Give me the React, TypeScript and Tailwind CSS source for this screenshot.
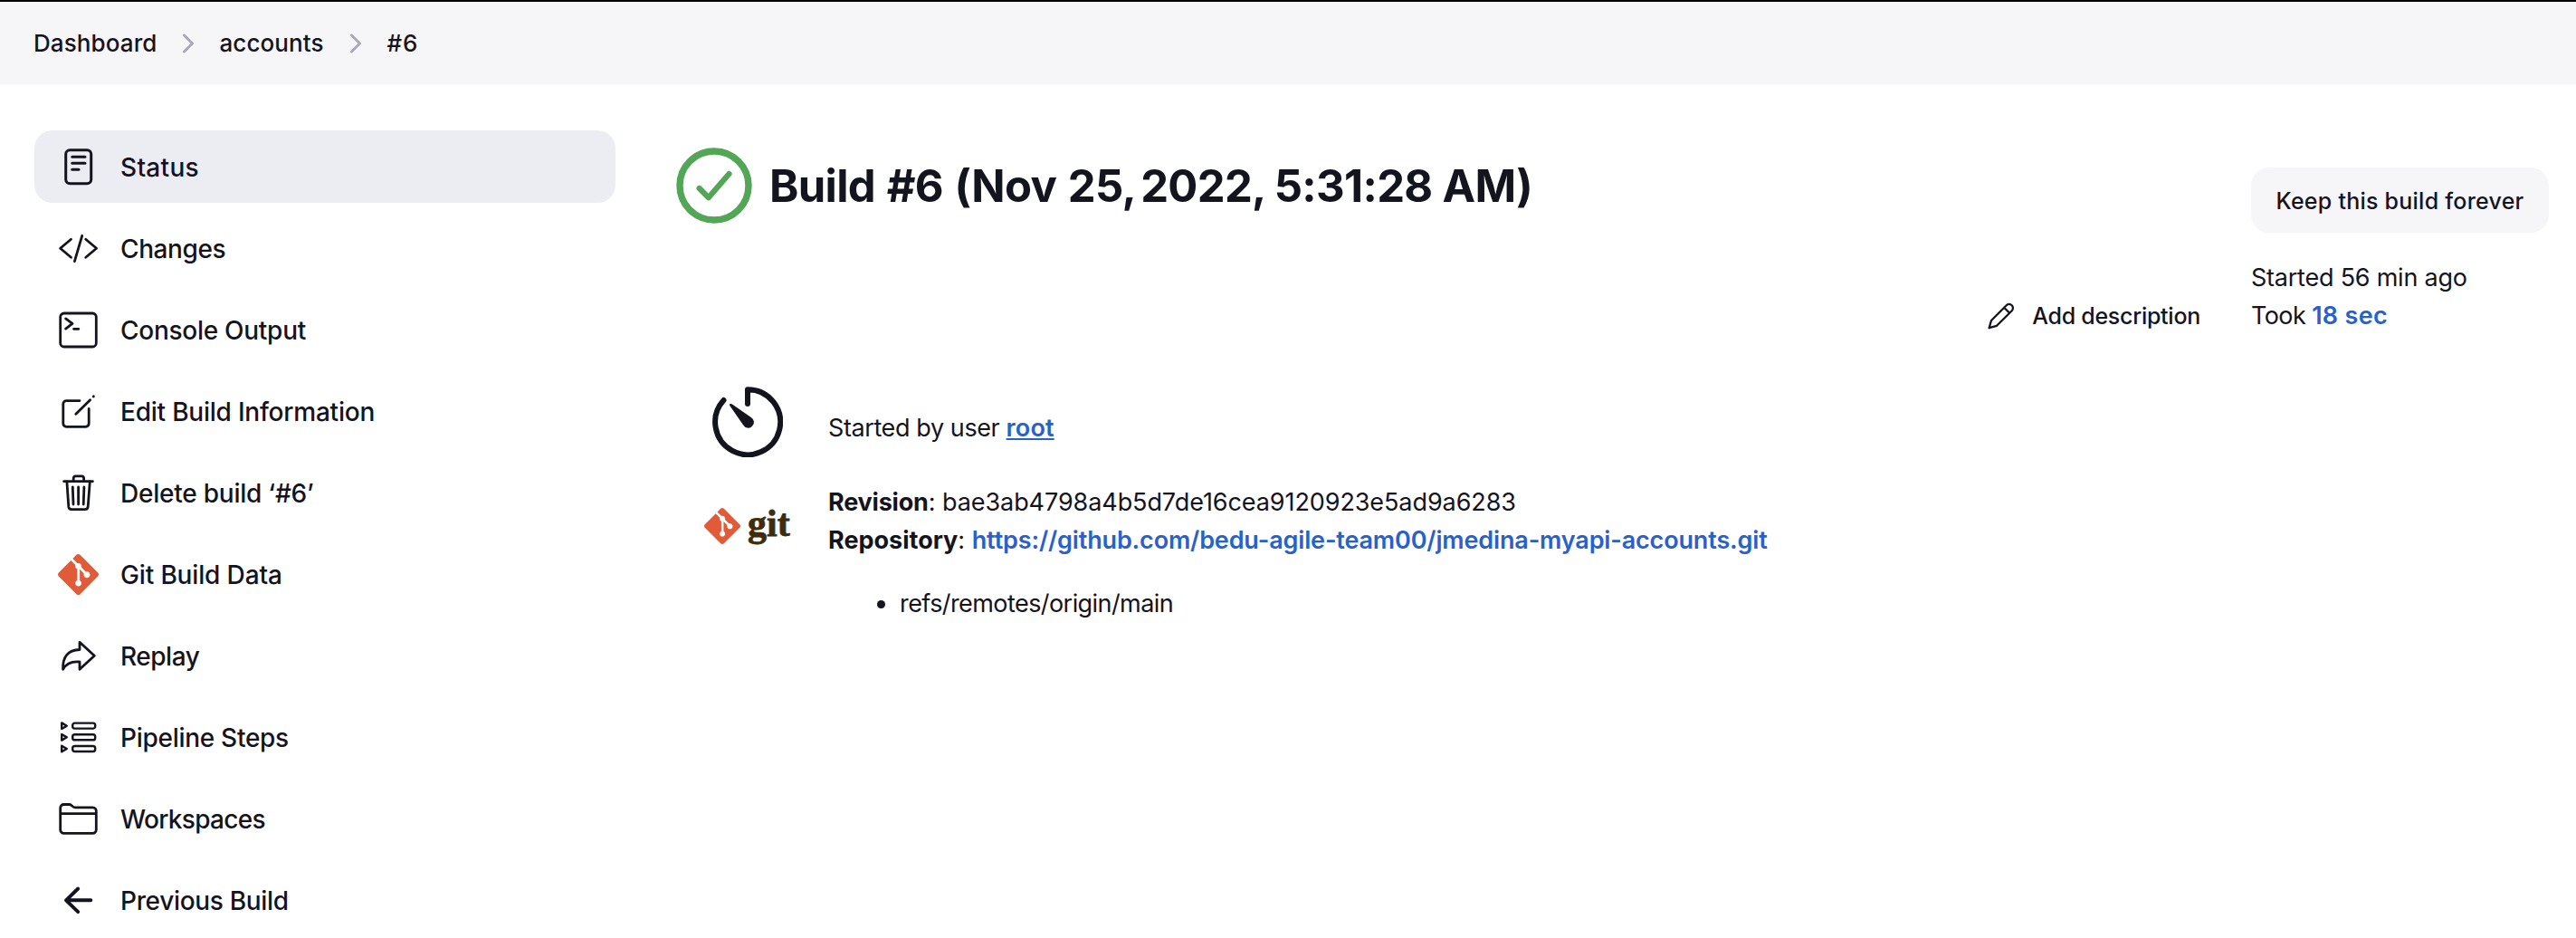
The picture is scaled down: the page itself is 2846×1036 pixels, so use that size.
import type { ReactNode } from "react";
import { SiGit } from "react-icons/si";

function Icon({ children, w = 2.8 }: { children: ReactNode; w?: number }) {
  return (
    <svg
      viewBox="0 0 48 48"
      className="size-12 shrink-0"
      fill="none"
      stroke="currentColor"
      strokeWidth={w}
      strokeLinecap="round"
      strokeLinejoin="round"
    >
      {children}
    </svg>
  );
}

const tasks: { label: string; spacing: string; active?: boolean; icon: ReactNode }[] = [
  {
    label: "Status",
    spacing: "tracking-[0.3px]",
    active: true,
    icon: (
      <Icon w={3}>
        <rect x="10.7" y="5.8" width="28" height="37" rx="4.5" />
        <path d="M17.7 13.3H32M17.7 20.3H32M17.7 27.3H25" />
      </Icon>
    ),
  },
  {
    label: "Changes",
    spacing: "tracking-[-0.4px]",
    icon: (
      <Icon w={2.8}>
        <path d="M16.5 14.3L4.6 24.3l11.9 10M32.7 14.3l11.9 10-11.9 10M28.7 10.3l-8.3 28.4" />
      </Icon>
    ),
  },
  {
    label: "Console Output",
    spacing: "tracking-[-0.27px]",
    icon: (
      <Icon w={2.8}>
        <rect x="4.7" y="6" width="39.6" height="37" rx="4" />
        <path d="M10.6 11.9l7.4 5.5-7.4 5.7M19.5 23.3h5.3" />
      </Icon>
    ),
  },
  {
    label: "Edit Build Information",
    spacing: "tracking-[-0.22px]",
    icon: (
      <Icon w={2.8}>
        <path d="M26 12.6H11.3a3.5 3.5 0 0 0-3.5 3.5v21.7a3.5 3.5 0 0 0 3.5 3.5h21.4a3.5 3.5 0 0 0 3.5-3.5V21.5" />
        <path d="M21.8 27.3L37.6 11.7M41.2 8l.2-.2" />
      </Icon>
    ),
  },
  {
    label: "Delete build ‘#6’",
    spacing: "tracking-[-0.23px]",
    icon: (
      <Icon w={2.8}>
        <path d="M8.6 11.7h31.8M19.2 11.5V8.2a2.3 2.3 0 0 1 2.3-2.3h6.8a2.3 2.3 0 0 1 2.3 2.3v3.3" />
        <path d="M11.9 12l1.9 27.7a3.3 3.3 0 0 0 3.3 3h14.8a3.3 3.3 0 0 0 3.3-3L37.3 12" />
        <path d="M18.3 18l.7 19M24.6 18v19M30.9 18l-.7 19" />
      </Icon>
    ),
  },
  {
    label: "Git Build Data",
    spacing: "tracking-[-0.15px]",
    icon: (
      <span className="flex size-12 shrink-0 items-center justify-center">
        <SiGit className="size-[45px] text-[#e15b38]" />
      </span>
    ),
  },
  {
    label: "Replay",
    spacing: "tracking-[-0.48px]",
    icon: (
      <Icon w={2.8}>
        <path d="M26 9.3L42.3 24.3 26 39.3V31C17.5 30.2 11.5 32 7.6 39.3C7 25.5 13 17.8 26 17.5Z" />
      </Icon>
    ),
  },
  {
    label: "Pipeline Steps",
    spacing: "tracking-[-0.28px]",
    icon: (
      <Icon w={2.4}>
        <path d="M6.2 8.4l5.6 3.3-5.6 3.3zM6.2 21l5.6 3.3-5.6 3.3zM6.2 33.7l5.6 3.3-5.6 3.3z" />
        <rect x="18.2" y="8.6" width="25" height="6" rx="2.4" />
        <rect x="18.2" y="21.3" width="25" height="6" rx="2.4" />
        <rect x="18.2" y="34" width="25" height="6" rx="2.4" />
      </Icon>
    ),
  },
  {
    label: "Workspaces",
    spacing: "tracking-[-0.68px]",
    icon: (
      <Icon w={2.8}>
        <path d="M4.7 36.5V12.2A3.8 3.8 0 0 1 8.5 8.5h6.2c2.6 0 3.3 3.3 6 3.3h19.8a3.8 3.8 0 0 1 3.8 3.8v20.9a3.8 3.8 0 0 1-3.8 3.8h-32a3.8 3.8 0 0 1-3.8-3.8zM4.7 18.7h39.6" />
      </Icon>
    ),
  },
  {
    label: "Previous Build",
    spacing: "tracking-[-0.33px]",
    icon: (
      <Icon w={3.9}>
        <path d="M38.3 24.3H11M24.2 11.5L11 24.3l13.2 12.9" />
      </Icon>
    ),
  },
];

function Chevron() {
  return (
    <svg
      viewBox="0 0 12 22"
      className="h-[22px] w-3 shrink-0"
      fill="none"
      stroke="#a7a7b8"
      strokeWidth="2.8"
      strokeLinecap="round"
      strokeLinejoin="round"
    >
      <path d="M1.5 2l9 9-9 9" />
    </svg>
  );
}

export default function App() {
  return (
    <div className="h-[1036px] overflow-hidden bg-white font-['Inter',sans-serif] text-[27px] leading-[42px] text-[#14141f]">
      <nav className="flex h-[93px] items-center border-t-2 border-black bg-[#f6f6f8] pl-[37px] text-[26px] font-medium">
        <span className="mr-[28px] tracking-[0.1px]">Dashboard</span>
        <Chevron />
        <span className="mr-[29px] ml-[29px] tracking-[0.09px]">accounts</span>
        <Chevron />
        <span className="ml-[29px] tracking-[0.7px]">#6</span>
      </nav>

      <div className="flex pt-[51px] pr-[30px] pl-[38px]">
        <aside className="flex w-[642px] shrink-0 flex-col gap-2.5">
          {tasks.map((t) => (
            <a
              key={t.label}
              className={`flex h-20 shrink-0 items-center gap-[23px] rounded-[20px] pl-6 text-[28px] font-medium ${t.active ? "bg-[#ecedf3]" : ""}`}
            >
              {t.icon}
              <span className={`pt-0.5 ${t.spacing}`}>{t.label}</span>
            </a>
          ))}
        </aside>

        <main className="ml-[67px] flex-1">
          <div className="flex h-[226px]">
            <div className="mt-[19px] flex h-[84px] flex-1 items-center gap-[19px]">
              <svg
                viewBox="0 0 84 84"
                className="size-[84px] shrink-0"
                fill="none"
                stroke="#52a655"
                strokeLinecap="round"
                strokeLinejoin="round"
              >
                <circle cx="42" cy="42" r="38" strokeWidth="7.4" />
                <path d="M25.6 45l10.2 10.2L58.5 29" strokeWidth="6.2" />
              </svg>
              <h1 className="pt-0.5 text-[49px] leading-[60px] font-bold tracking-[-0.67px]">
                <span className="mr-[-6px] [word-spacing:1.7px]">Build #6 (Nov 25,</span>{" "}
                <span className="mr-[-2px]">2022,</span> 5:31:28 AM)
              </h1>
            </div>
            <a className="mr-[56px] flex items-center gap-[19px] self-end text-[25px] font-medium">
              <svg
                viewBox="0 0 30 30"
                className="size-[30px]"
                fill="none"
                stroke="currentColor"
                strokeWidth="2.3"
                strokeLinecap="round"
                strokeLinejoin="round"
              >
                <path d="M1.6 28.2L4 20 20.7 3.2a4.2 4.2 0 0 1 6 6L10 25.8zM18.2 5.8l6 6" />
              </svg>
              <span className="tracking-[-0.27px]">Add description</span>
            </a>
            <div className="w-[329px] pt-[41px]">
              <button className="block h-[72px] w-[329px] rounded-[20px] bg-[#f6f6f8] pt-0.5 text-[25px] font-medium tracking-[0.24px]">
                Keep this build forever
              </button>
              <div className="mt-[29px]">
                <p className="tracking-[-0.23px]">Started 56 min ago</p>
                <p>
                  <span className="tracking-[-0.6px]">Took </span>
                  <a className="font-semibold tracking-[0.3px] text-[#2861cb]">18 sec</a>
                </p>
              </div>
            </div>
          </div>

          <section className="mt-[57px] flex h-[78px]">
            <div className="w-[168px] shrink-0 pl-10">
              <svg
                viewBox="0 0 78 78"
                className="size-[78px]"
                fill="none"
                stroke="currentColor"
                strokeWidth="6"
                strokeLinecap="round"
                strokeLinejoin="round"
              >
                <path d="M39 19V3.2A36 36 0 1 1 12.5 15" />
                <path
                  d="M19.3 19.3c-.8.8.2 2.1.8 3L34.2 42.5a6.3 6.3 0 1 0 8.6-8.6L22.3 19.7c-.9-.6-2.2-1.2-3-.4z"
                  fill="currentColor"
                  stroke="none"
                />
              </svg>
            </div>
            <p className="pt-[25px] tracking-[-0.4px]">
              Started by user{" "}
              <a className="font-semibold tracking-[0.15px] text-[#2861cb] underline decoration-2 underline-offset-[2px]">
                root
              </a>
            </p>
          </section>

          <section className="mt-7 flex">
            <div className="flex w-[168px] shrink-0 items-start pt-7 pl-[31px]">
              <SiGit className="size-10 text-[#e15b38]" />
              <span className="ml-2 font-['Liberation_Serif',serif] text-[42px] leading-[34px] font-bold text-[#3e2c0b] [-webkit-text-stroke:0.8px_#3e2c0b]">
                git
              </span>
            </div>
            <div className="pt-px">
              <p>
                <b className="tracking-[-0.21px]">Revision</b>:{" "}
                <span className="tracking-[-0.08px]">bae3ab4798a4b5d7de16cea9120923e5ad9a6283</span>
              </p>
              <p>
                <b>Repository</b>:{" "}
                <a className="font-semibold tracking-[-0.15px] text-[#2861cb]">
                  https://github.com/bedu-agile-team00/jmedina-myapi-accounts.git
                </a>
              </p>
              <ul className="mt-7 pl-[54px]">
                <li className="flex items-center gap-4 tracking-[-0.57px]">
                  <span className="size-[9px] rounded-full bg-[#14141f]" />
                  refs/remotes/origin/main
                </li>
              </ul>
            </div>
          </section>
        </main>
      </div>
    </div>
  );
}
